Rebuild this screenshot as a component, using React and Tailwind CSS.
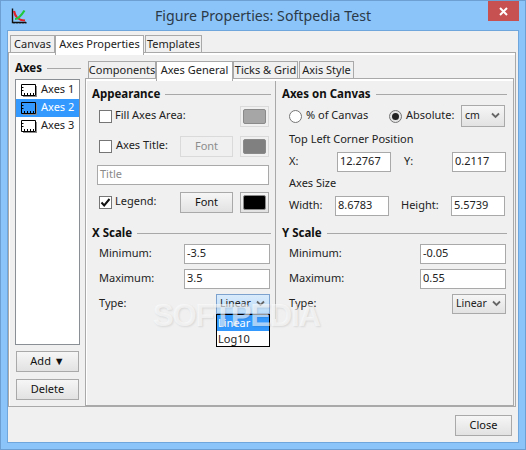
const FONT = "font-['Noto_Sans','Liberation_Sans',sans-serif]";

function AppIcon() {
  return (
    <svg width="16" height="16" viewBox="0 0 16 16" className="ml-[10px] mt-[7px]">
      <path d="M1.5 0.5V14.5H15" fill="none" stroke="#111" strokeWidth="1.4" />
      <path d="M3 15.5V14M6 15.5V14M9 15.5V14M12 15.5V14M15 15.5V14" stroke="#111" strokeWidth="1" />
      <path d="M3 3C4 8 6 12 14 12.5" fill="none" stroke="#e01f26" strokeWidth="2.2" />
      <path d="M4 11C7 11 10 8 13.5 2.5" fill="none" stroke="#1fc83c" strokeWidth="2.2" />
    </svg>
  );
}

function AxesIcon() {
  return (
    <svg width="16" height="13" viewBox="0 0 16 13" className="shrink-0">
      <path d="M15 2H16V13H2V12H15Z" fill="#8a8a8a" />
      <path d="M0.5 0.5H14.5V11.5H0.5Z" fill="none" stroke="#000" />
      <path d="M3.5 9V11M6.5 9V11M9.5 9V11M12.5 9V11M1 3.5H2.5M1 6.5H2.5" stroke="#000" />
    </svg>
  );
}

function Heading({ children }) {
  return (
    <div className="flex h-4 items-center gap-[5px] text-[11.5px] font-bold text-[#111]">
      <span className="whitespace-nowrap">{children}</span>
      <span className="h-px flex-1 bg-[#a8a8a8]" />
    </div>
  );
}

function Input({ value, className = "", muted }) {
  return (
    <div className={`flex h-5 items-center border border-[#a9a9a9] bg-white pb-px pl-[2px] text-[11px] ${muted ? "text-[#8a8a8a]" : "text-[#222]"} ${className}`}>
      {value}
    </div>
  );
}

function Button({ children, className = "", disabled }) {
  return (
    <div
      className={`flex items-center justify-center border pb-px text-[11px] ${
        disabled
          ? "border-[#dadada] bg-[#f0f0f0] text-[#8d8d8d]"
          : "border-[#a9a9a9] bg-gradient-to-b from-[#f6f6f6] to-[#e2e2e2] text-[#111]"
      } ${className}`}
    >
      {children}
    </div>
  );
}

function Swatch({ color, disabled }) {
  return (
    <div className={`flex h-[21px] w-[29px] items-center justify-center border ${disabled ? "border-[#dadada] bg-[#f0f0f0]" : "border-[#a9a9a9] bg-gradient-to-b from-[#f6f6f6] to-[#e2e2e2]"}`}>
      <div className={`h-[15px] w-[23px] rounded-[2px] border border-[#8a8a8a] ${color}`} />
    </div>
  );
}

function Check({ checked }) {
  return (
    <div className="flex h-[13px] w-[13px] shrink-0 items-center justify-center border border-[#767676] bg-white">
      {checked && (
        <svg width="11" height="11" viewBox="0 0 11 11">
          <path d="M1.5 5.5L4.2 8.5L9.5 2" fill="none" stroke="#111" strokeWidth="2" />
        </svg>
      )}
    </div>
  );
}

function Radio({ checked }) {
  return (
    <div className={`flex h-[13px] w-[13px] shrink-0 items-center justify-center rounded-full border border-[#767676] ${checked ? "bg-[#e4e4e4]" : "bg-white"}`}>
      {checked && <div className="h-[7px] w-[7px] rounded-full bg-[#222]" />}
    </div>
  );
}

function Chevron() {
  return (
    <svg width="9" height="7" viewBox="0 0 9 7" className="shrink-0">
      <path d="M1 1.5L4.5 5L8 1.5" fill="none" stroke="#666" strokeWidth="1.8" />
    </svg>
  );
}

function Combo({ value, className = "", focused }) {
  return (
    <div
      className={`flex items-center justify-between border pb-px pl-[3px] pr-[4px] text-[10.5px] text-[#222] ${
        focused
          ? "border-[#7da2ce] bg-gradient-to-b from-[#d9ebfc] to-[#bbdcf8]"
          : "border-[#a9a9a9] bg-gradient-to-b from-[#f6f6f6] to-[#e2e2e2]"
      } ${className}`}
    >
      <span>{value}</span>
      <Chevron />
    </div>
  );
}

function Tab({ label, active, className = "" }) {
  return (
    <div
      className={`flex items-center justify-center whitespace-nowrap border border-b-0 border-[#a9a9a9] text-[11px] text-[#222] ${
        active ? "z-10 -mb-[3px] bg-white pb-[3px]" : "bg-[#f0f0f0]"
      } ${className}`}
    >
      {label}
    </div>
  );
}

function ScaleRow({ label, value, className = "" }) {
  return (
    <div className={`flex items-center justify-between pl-[7px] pr-px ${className}`}>
      <span className="pb-[2px] text-[11px] text-[#222]">{label}</span>
      <Input value={value} className="w-[86px]" />
    </div>
  );
}

export default function App() {
  return (
    <div className={`relative flex h-[450px] w-[526px] flex-col overflow-hidden border border-[#6d9fd3] bg-[#8bc4f9] ${FONT}`}>
      {/* Title bar */}
      <div className="grid h-[29px] shrink-0 grid-cols-[1fr_auto_1fr]">
        <AppIcon />
        <div className="pt-[5px] text-[14.2px] leading-[20px] text-[#2b3a48]">Figure Properties: Softpedia Test</div>
        <div className="mr-[6px] flex h-5 w-[31px] items-center justify-center justify-self-end bg-[#c75050]">
          <svg width="9" height="9" viewBox="0 0 9 9">
            <path d="M1 1L8 8M8 1L1 8" stroke="#fff" strokeWidth="2" />
          </svg>
        </div>
      </div>

      {/* Client area */}
      <div className="ml-[6px] h-[413px] w-[512px] border border-[#6fa6dc] bg-[#f0f0f0]">
        {/* Outer tabs */}
        <div className="flex h-[21px] items-end pl-[2px]">
          <Tab label="Canvas" className="h-[17px] w-[45px]" />
          <Tab label="Axes Properties" active className="h-[20px] w-[89px]" />
          <Tab label="Templates" className="ml-px h-[17px] w-[57px]" />
        </div>

        {/* Outer panel */}
        <div className="flex h-[355px] w-[508px] border border-[#a9a9a9] bg-white pl-px pt-[2px]">
          <div className="flex h-full w-full bg-[#f0f0f0]">
            {/* Axes list column */}
            <div className="flex w-[75px] shrink-0 flex-col pl-[5px] pr-[4px] pt-[5px]">
              <Heading>Axes</Heading>
              <div className="mt-[3px] h-[266px] w-[65px] border border-[#8a8f96] bg-white pt-px text-[11px] text-[#222]">
                {["Axes 1", "Axes 2", "Axes 3"].map((a, i) => (
                  <div key={a} className={`flex h-[18px] items-center gap-[4px] pl-[5px] ${i === 1 ? "bg-[#3399ff] text-white" : ""}`}>
                    <AxesIcon />
                    <span className="whitespace-nowrap pb-[2px]">{a}</span>
                  </div>
                ))}
              </div>
              <Button className="ml-px mt-[6px] h-[21px] w-[63px]">Add&nbsp;▼</Button>
              <Button className="ml-px mt-[7px] h-[21px] w-[63px]">Delete</Button>
            </div>

            {/* Inner tabs + panel */}
            <div className="flex flex-1 flex-col pt-[2px]">
              <div className="flex h-[21px] items-end pl-[3px]">
                <Tab label="Components" className="h-[17px] w-[68px]" />
                <Tab label="Axes General" active className="h-[20px] w-[77px]" />
                <Tab label="Ticks & Grid" className="h-[17px] w-[65px]" />
                <Tab label="Axis Style" className="ml-px h-[17px] w-[55px]" />
              </div>
              <div className="flex h-[328px] w-[429px] border border-[#a9a9a9] bg-white pl-px pt-[2px]">
                <div className="flex h-full w-full items-start bg-[#f0f0f0]">
                  {/* Left column */}
                  <div className="h-[238px] w-[189px] shrink-0 border-r border-[#a9a9a9] pl-[5px] pr-[4px] pt-[5px]">
                    <Heading>Appearance</Heading>
                    <div className="mt-[4px] flex h-[21px] items-center pl-[7px] pr-[2px]">
                      <Check />
                      <span className="ml-[3px] flex-1 pb-[2px] text-[11px] text-[#222]">Fill Axes Area:</span>
                      <Swatch color="bg-[#a6a6a6]" disabled />
                    </div>
                    <div className="mt-[9px] flex h-[21px] items-center pl-[7px] pr-[2px]">
                      <Check />
                      <span className="ml-[4px] flex-1 pb-[2px] text-[11px] text-[#222]">Axes Title:</span>
                      <Button disabled className="mr-[7px] h-[21px] w-[53px]">Font</Button>
                      <Swatch color="bg-[#808080]" disabled />
                    </div>
                    <Input value="Title" muted className="ml-[5px] mr-[2px] mt-[8px]" />
                    <div className="mt-[7px] flex h-[21px] items-center pl-[7px] pr-[2px]">
                      <Check checked />
                      <span className="ml-[3px] flex-1 pb-[2px] text-[11px] text-[#222]">Legend:</span>
                      <Button className="mr-[7px] h-[21px] w-[53px]">Font</Button>
                      <Swatch color="bg-black" />
                    </div>
                    <div className="mt-[12px]">
                      <Heading>X Scale</Heading>
                    </div>
                    <ScaleRow label="Minimum:" value="-3.5" className="mt-[3px]" />
                    <ScaleRow label="Maximum:" value="3.5" className="mt-[5px]" />
                    <div className="mt-[5px] flex items-center justify-between pl-[7px] pr-px">
                      <span className="pb-[2px] text-[11px] text-[#222]">Type:</span>
                      <div className="relative">
                        <Combo value="Linear" focused className="h-5 w-[54px]" />
                        <div className="absolute left-0 top-5 z-20 h-[33px] w-[54px] border border-black bg-white text-[11px] text-[#222]">
                          <div className="flex h-4 items-center bg-[#3399ff] pl-px text-white">Linear</div>
                          <div className="flex h-4 items-center pl-px">Log10</div>
                        </div>
                      </div>
                    </div>
                  </div>

                  {/* Right column */}
                  <div className="w-[231px] pl-[6px] pt-[5px]">
                    <Heading>Axes on Canvas</Heading>
                    <div className="mt-[3px] flex h-[22px] items-center whitespace-nowrap pl-[7px] text-[11px] text-[#222]">
                      <Radio />
                      <span className="ml-[4px] w-[63px] pb-[2px]">% of Canvas</span>
                      <div className="ml-[20px]"><Radio checked /></div>
                      <span className="ml-[4px] w-[45px] pb-[2px]">Absolute:</span>
                      <Combo value="cm" className="ml-[10px] h-[22px] w-[44px]" />
                    </div>
                    <div className="ml-[7px] mt-[5px] flex h-4 items-center pb-[2px] text-[11px] text-[#222]">Top Left Corner Position</div>
                    <div className="mt-[4px] flex items-center pl-[7px] text-[11px] text-[#222]">
                      <span className="w-[48px] pb-[2px]">X:</span>
                      <Input value="12.2767" className="w-[54px]" />
                      <span className="ml-[13px] w-[48px] pb-[2px]">Y:</span>
                      <Input value="0.2117" className="w-[54px]" />
                    </div>
                    <div className="ml-[7px] mt-[4px] flex h-4 items-center pb-[2px] text-[11px] text-[#222]">Axes Size</div>
                    <div className="mt-[4px] flex items-center pl-[7px] text-[11px] text-[#222]">
                      <span className="w-[46px] pb-[2px]">Width:</span>
                      <Input value="8.6783" className="w-[54px]" />
                      <span className="ml-[12px] w-[50px] pb-[2px]">Height:</span>
                      <Input value="5.5739" className="w-[54px]" />
                    </div>
                    <div className="mt-[9px]">
                      <Heading>Y Scale</Heading>
                    </div>
                    <ScaleRow label="Minimum:" value="-0.05" className="mt-[3px]" />
                    <ScaleRow label="Maximum:" value="0.55" className="mt-[5px]" />
                    <div className="mt-[5px] flex items-center justify-between pl-[7px] pr-px">
                      <span className="pb-[2px] text-[11px] text-[#222]">Type:</span>
                      <Combo value="Linear" className="h-5 w-[54px]" />
                    </div>
                  </div>
                </div>
              </div>
            </div>
          </div>
        </div>

        {/* Footer */}
        <div className="flex justify-end pr-[6px] pt-[8px]">
          <Button className="h-[21px] w-[57px]">Close</Button>
        </div>
      </div>

      {/* Watermark */}
      <div className="pointer-events-none absolute left-[152px] top-[297px] z-30 text-[31px] font-bold leading-[36px] tracking-[-1.2px] text-white/60 [font-family:'Liberation_Sans',sans-serif] [text-shadow:1px_1px_2px_rgba(0,0,0,0.1)]">
        SOFTPEDIA
      </div>
    </div>
  );
}
